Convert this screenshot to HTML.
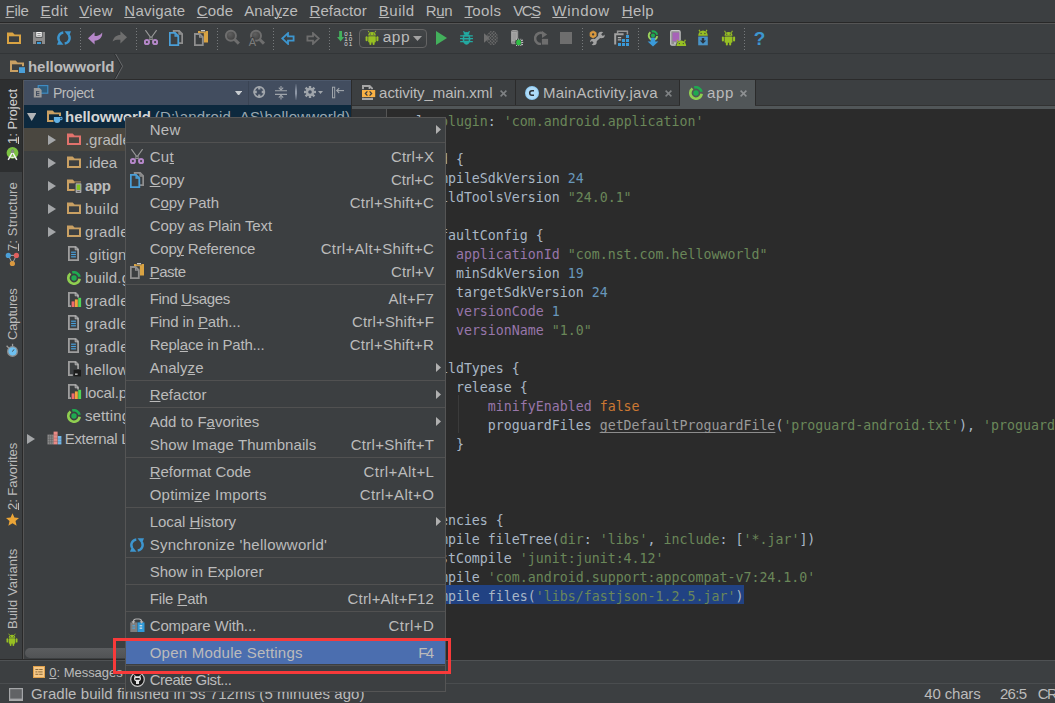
<!DOCTYPE html>
<html><head><meta charset="utf-8"><title>hellowworld - Android Studio</title>
<style>
html,body{margin:0;padding:0;background:#3c3f41;overflow:hidden;}
#app{position:relative;width:1055px;height:703px;overflow:hidden;background:#3c3f41;font-family:'Liberation Sans', sans-serif;}
#app div,#app svg,#app span.t{position:absolute;}
#app span.t{white-space:pre;line-height:20px;height:20px;}
#app .code{font-family:'DejaVu Sans Mono', 'Liberation Mono', monospace;font-size:13.288px;line-height:19px;height:19px;white-space:pre;padding-top:1.1px;box-sizing:border-box;}
#app u{text-decoration:underline;text-underline-offset:1px;text-decoration-thickness:1px;}
</style></head><body>
<div id="app">
<div style="left:0px;top:0px;width:1055px;height:703px;background:#3c3f41;"></div>
<div style="left:0px;top:22px;width:1055px;height:1px;background:#282828;"></div>
<div style="left:0px;top:23px;width:1055px;height:1px;background:#555555;"></div>
<div style="left:0px;top:79px;width:1055px;height:1px;background:#323232;"></div>
<span class="t" style="left:5.50px;top:0.80px;font-size:15px;color:#bbbbbb;letter-spacing:-0.257px;"><u>F</u>ile</span>
<span class="t" style="left:40.50px;top:0.80px;font-size:15px;color:#bbbbbb;letter-spacing:0.447px;"><u>E</u>dit</span>
<span class="t" style="left:79.30px;top:0.80px;font-size:15px;color:#bbbbbb;letter-spacing:0.317px;"><u>V</u>iew</span>
<span class="t" style="left:124.30px;top:0.80px;font-size:15px;color:#bbbbbb;letter-spacing:0.242px;"><u>N</u>avigate</span>
<span class="t" style="left:196.80px;top:0.80px;font-size:15px;color:#bbbbbb;letter-spacing:0.180px;"><u>C</u>ode</span>
<span class="t" style="left:244.30px;top:0.80px;font-size:15px;color:#bbbbbb;letter-spacing:0.037px;">Anal<u>y</u>ze</span>
<span class="t" style="left:309.50px;top:0.80px;font-size:15px;color:#bbbbbb;letter-spacing:0.071px;"><u>R</u>efactor</span>
<span class="t" style="left:378.80px;top:0.80px;font-size:15px;color:#bbbbbb;letter-spacing:0.510px;"><u>B</u>uild</span>
<span class="t" style="left:425.80px;top:0.80px;font-size:15px;color:#bbbbbb;letter-spacing:-0.316px;">R<u>u</u>n</span>
<span class="t" style="left:464.50px;top:0.80px;font-size:15px;color:#bbbbbb;letter-spacing:0.342px;"><u>T</u>ools</span>
<span class="t" style="left:513.30px;top:0.80px;font-size:15px;color:#bbbbbb;letter-spacing:-1.500px;">VC<u>S</u></span>
<span class="t" style="left:552.30px;top:0.80px;font-size:15px;color:#bbbbbb;letter-spacing:0.708px;"><u>W</u>indow</span>
<span class="t" style="left:621.80px;top:0.80px;font-size:15px;color:#bbbbbb;letter-spacing:0.347px;"><u>H</u>elp</span>
<div style="left:80px;top:28px;width:1px;height:1px;background:#777a7c;"></div>
<div style="left:80px;top:31px;width:1px;height:1px;background:#777a7c;"></div>
<div style="left:80px;top:34px;width:1px;height:1px;background:#777a7c;"></div>
<div style="left:80px;top:37px;width:1px;height:1px;background:#777a7c;"></div>
<div style="left:80px;top:40px;width:1px;height:1px;background:#777a7c;"></div>
<div style="left:80px;top:43px;width:1px;height:1px;background:#777a7c;"></div>
<div style="left:80px;top:46px;width:1px;height:1px;background:#777a7c;"></div>
<div style="left:80px;top:49px;width:1px;height:1px;background:#777a7c;"></div>
<div style="left:136px;top:28px;width:1px;height:1px;background:#777a7c;"></div>
<div style="left:136px;top:31px;width:1px;height:1px;background:#777a7c;"></div>
<div style="left:136px;top:34px;width:1px;height:1px;background:#777a7c;"></div>
<div style="left:136px;top:37px;width:1px;height:1px;background:#777a7c;"></div>
<div style="left:136px;top:40px;width:1px;height:1px;background:#777a7c;"></div>
<div style="left:136px;top:43px;width:1px;height:1px;background:#777a7c;"></div>
<div style="left:136px;top:46px;width:1px;height:1px;background:#777a7c;"></div>
<div style="left:136px;top:49px;width:1px;height:1px;background:#777a7c;"></div>
<div style="left:217px;top:28px;width:1px;height:1px;background:#777a7c;"></div>
<div style="left:217px;top:31px;width:1px;height:1px;background:#777a7c;"></div>
<div style="left:217px;top:34px;width:1px;height:1px;background:#777a7c;"></div>
<div style="left:217px;top:37px;width:1px;height:1px;background:#777a7c;"></div>
<div style="left:217px;top:40px;width:1px;height:1px;background:#777a7c;"></div>
<div style="left:217px;top:43px;width:1px;height:1px;background:#777a7c;"></div>
<div style="left:217px;top:46px;width:1px;height:1px;background:#777a7c;"></div>
<div style="left:217px;top:49px;width:1px;height:1px;background:#777a7c;"></div>
<div style="left:273px;top:28px;width:1px;height:1px;background:#777a7c;"></div>
<div style="left:273px;top:31px;width:1px;height:1px;background:#777a7c;"></div>
<div style="left:273px;top:34px;width:1px;height:1px;background:#777a7c;"></div>
<div style="left:273px;top:37px;width:1px;height:1px;background:#777a7c;"></div>
<div style="left:273px;top:40px;width:1px;height:1px;background:#777a7c;"></div>
<div style="left:273px;top:43px;width:1px;height:1px;background:#777a7c;"></div>
<div style="left:273px;top:46px;width:1px;height:1px;background:#777a7c;"></div>
<div style="left:273px;top:49px;width:1px;height:1px;background:#777a7c;"></div>
<div style="left:329px;top:28px;width:1px;height:1px;background:#777a7c;"></div>
<div style="left:329px;top:31px;width:1px;height:1px;background:#777a7c;"></div>
<div style="left:329px;top:34px;width:1px;height:1px;background:#777a7c;"></div>
<div style="left:329px;top:37px;width:1px;height:1px;background:#777a7c;"></div>
<div style="left:329px;top:40px;width:1px;height:1px;background:#777a7c;"></div>
<div style="left:329px;top:43px;width:1px;height:1px;background:#777a7c;"></div>
<div style="left:329px;top:46px;width:1px;height:1px;background:#777a7c;"></div>
<div style="left:329px;top:49px;width:1px;height:1px;background:#777a7c;"></div>
<div style="left:582px;top:28px;width:1px;height:1px;background:#777a7c;"></div>
<div style="left:582px;top:31px;width:1px;height:1px;background:#777a7c;"></div>
<div style="left:582px;top:34px;width:1px;height:1px;background:#777a7c;"></div>
<div style="left:582px;top:37px;width:1px;height:1px;background:#777a7c;"></div>
<div style="left:582px;top:40px;width:1px;height:1px;background:#777a7c;"></div>
<div style="left:582px;top:43px;width:1px;height:1px;background:#777a7c;"></div>
<div style="left:582px;top:46px;width:1px;height:1px;background:#777a7c;"></div>
<div style="left:582px;top:49px;width:1px;height:1px;background:#777a7c;"></div>
<div style="left:638px;top:28px;width:1px;height:1px;background:#777a7c;"></div>
<div style="left:638px;top:31px;width:1px;height:1px;background:#777a7c;"></div>
<div style="left:638px;top:34px;width:1px;height:1px;background:#777a7c;"></div>
<div style="left:638px;top:37px;width:1px;height:1px;background:#777a7c;"></div>
<div style="left:638px;top:40px;width:1px;height:1px;background:#777a7c;"></div>
<div style="left:638px;top:43px;width:1px;height:1px;background:#777a7c;"></div>
<div style="left:638px;top:46px;width:1px;height:1px;background:#777a7c;"></div>
<div style="left:638px;top:49px;width:1px;height:1px;background:#777a7c;"></div>
<div style="left:744px;top:28px;width:1px;height:1px;background:#777a7c;"></div>
<div style="left:744px;top:31px;width:1px;height:1px;background:#777a7c;"></div>
<div style="left:744px;top:34px;width:1px;height:1px;background:#777a7c;"></div>
<div style="left:744px;top:37px;width:1px;height:1px;background:#777a7c;"></div>
<div style="left:744px;top:40px;width:1px;height:1px;background:#777a7c;"></div>
<div style="left:744px;top:43px;width:1px;height:1px;background:#777a7c;"></div>
<div style="left:744px;top:46px;width:1px;height:1px;background:#777a7c;"></div>
<div style="left:744px;top:49px;width:1px;height:1px;background:#777a7c;"></div>
<svg style="left:7px;top:32px;" width="14" height="12" viewBox="0 0 14 12"><path d="M0 0.5h5.6l2 2H14V12H0z" fill="#d9a343"/><rect x="2" y="4.3" width="10" height="5.7" fill="#3c3f41"/></svg>
<svg style="left:33px;top:32px;" width="12" height="12" viewBox="0 0 12 12"><path d="M0 0h12v12H0z" fill="#8c8c8c"/><rect x="2.6" y="0" width="6.8" height="5.6" fill="#3c3f41"/><rect x="3.2" y="0" width="5.6" height="4.8" fill="#f4f4f4"/><rect x="4.3" y="1.2" width="3.4" height="0.8" fill="#777"/><rect x="4.3" y="2.9" width="3.4" height="0.8" fill="#777"/><rect x="3" y="9" width="6" height="3" fill="#3c3f41"/><rect x="4" y="10" width="4" height="2" fill="#3a9ad9"/></svg>
<svg style="left:57px;top:31px;" width="14" height="14" viewBox="0 0 14 14"><g fill="none" stroke="#3d96cf" stroke-width="2.5"><path d="M6.3 1.45A5.6 5.6 0 0 0 2.15 9.8"/><path d="M7.7 12.55A5.6 5.6 0 0 0 11.85 4.2"/></g><path d="M7.5 0.3H14L11.9 5.8z" fill="#3d96cf"/><path d="M6.5 13.7H0L2.1 8.2z" fill="#3d96cf"/></svg>
<svg style="left:88px;top:32px;" width="15" height="13" viewBox="0 0 15 13"><path d="M0 6.2L6.6 0.3V4C9.5 4 12.6 3 14.2 0.4C14.6 5 11.5 8.6 6.6 8.7V12.6z" fill="#b587c9"/></svg>
<svg style="left:112px;top:31px;" width="15" height="13" viewBox="0 0 15 13"><path d="M15 6.2L8.4 0.3V4C5.5 4 2 5.2 0.6 10.5C2.4 8.8 5 8.6 8.4 8.7V12.6z" fill="#6e6e6e"/></svg>
<svg style="left:144px;top:30px;" width="14" height="15" viewBox="0 0 14 15"><g stroke="#9c9c9c" stroke-width="1.1" fill="none"><path d="M1.4 0.2L8.6 10.2"/><path d="M12.6 0.2L5.4 10.2"/></g><rect x="5.9" y="7.2" width="2.2" height="2.2" fill="#3c3f41" stroke="#9c9c9c" stroke-width="0.8"/><circle cx="2.9" cy="12.1" r="2.1" fill="none" stroke="#b587c9" stroke-width="2"/><circle cx="11.1" cy="12.1" r="2.1" fill="none" stroke="#b587c9" stroke-width="2"/></svg>
<svg style="left:169px;top:30px;" width="14" height="16" viewBox="0 0 14 16"><path d="M4.7 0.8H10.0L13.2 4.0V13.200000000000001H4.7z" fill="#3c3f41" stroke="#8f8f8f" stroke-width="1.8" stroke-linejoin="miter"/><path d="M10.0 0.8V4.0H13.2" fill="none" stroke="#8f8f8f" stroke-width="1.26"/><path d="M0.8 2.8H6.1000000000000005L9.3 6.0V15.2H0.8z" fill="#3c3f41" stroke="#4a9fd8" stroke-width="1.8" stroke-linejoin="miter"/><path d="M6.1000000000000005 2.8V6.0H9.3" fill="none" stroke="#4a9fd8" stroke-width="1.26"/></svg>
<svg style="left:194px;top:30px;" width="14" height="16" viewBox="0 0 14 16"><rect x="4" y="1" width="10" height="11.5" fill="#d9a343"/><rect x="7" y="0" width="4" height="1.6" fill="#c9c9c9"/><rect x="6" y="1.2" width="6" height="1" fill="#3c3f41" opacity="0.5"/><rect x="0" y="3.2" width="9.8" height="13" fill="#3c3f41"/><path d="M0.8 4H5.6000000000000005L8.8 7.2V15.2H0.8z" fill="#3c3f41" stroke="#8f8f8f" stroke-width="1.8" stroke-linejoin="miter"/><path d="M5.6000000000000005 4V7.2H8.8" fill="none" stroke="#8f8f8f" stroke-width="1.26"/></svg>
<svg width="0" height="0" style="left:0;top:0"><defs><radialGradient id="lens" cx="0.4" cy="0.35" r="0.7"><stop offset="0" stop-color="#606060"/><stop offset="1" stop-color="#3e3e3e"/></radialGradient></defs></svg>
<svg style="left:224px;top:29px;" width="17" height="17" viewBox="0 0 17 17"><path d="M10.65 10.45L14.850000000000001 14.649999999999999" stroke="#6e6e6e" stroke-width="3" stroke-linecap="butt"/><circle cx="6.9" cy="6.7" r="5" fill="url(#lens)" stroke="#6e6e6e" stroke-width="2"/></svg>
<svg style="left:248px;top:29px;" width="18" height="18" viewBox="0 0 18 18"><path d="M11.75 10.45L15.95 14.649999999999999" stroke="#6e6e6e" stroke-width="3" stroke-linecap="butt"/><circle cx="8" cy="6.7" r="5" fill="url(#lens)" stroke="#6e6e6e" stroke-width="2"/><text x="0.8" y="16.7" font-family="Liberation Sans, sans-serif" font-size="11" fill="#7c7c7c" stroke="#3c3f41" stroke-width="2" paint-order="stroke">A</text></svg>
<svg style="left:281px;top:32px;" width="14" height="13" viewBox="0 0 14 13"><path d="M1.2 6.5L7 1.2V4.3H12.6V8.7H7V11.8z" fill="none" stroke="#3d96cf" stroke-width="1.8" stroke-linejoin="miter"/></svg>
<svg style="left:306px;top:32px;" width="14" height="13" viewBox="0 0 14 13"><path d="M12.8 6.5L7 1.2V4.3H1.4V8.7H7V11.8z" fill="none" stroke="#6e6e6e" stroke-width="1.8" stroke-linejoin="miter"/></svg>
<svg style="left:336.6px;top:30.4px;" width="7.2" height="12.4" viewBox="0 0 8 13"><path d="M2.4 0.8H5.6V7.4H8L4 12.3L0 7.4H2.4z" fill="#43b05c"/></svg>
<span class="t" style="left:344.30px;top:23.65px;font-size:6.2px;color:#dcdcdc;letter-spacing:0.909px;">01</span>
<span class="t" style="left:344.30px;top:28.65px;font-size:6.2px;color:#dcdcdc;letter-spacing:0.909px;">10</span>
<span class="t" style="left:344.30px;top:33.65px;font-size:6.2px;color:#dcdcdc;letter-spacing:0.909px;">01</span>
<div style="left:359px;top:29px;width:68px;height:19px;background:#3c3f41;border:1px solid #646464;border-radius:4px;box-sizing:border-box;background:linear-gradient(#434648,#393c3e);"></div>
<svg style="left:365px;top:30px;" width="14" height="15.5" viewBox="0 0 14 15.5"><g fill="#97c023"><path d="M3.2 5.6a3.8 3.6 0 0 1 7.6 0z"/><rect x="3.2" y="6.2" width="7.6" height="6.2" rx="0.8"/><rect x="0.6" y="6.2" width="2" height="5" rx="1"/><rect x="11.4" y="6.2" width="2" height="5" rx="1"/><rect x="4.4" y="11.5" width="2" height="3.6" rx="1"/><rect x="7.6" y="11.5" width="2" height="3.6" rx="1"/><path d="M4.2 2.6L3.2 0.8M9.8 2.6L10.8 0.8" stroke="#97c023" stroke-width="1"/></g><circle cx="5.3" cy="4" r="0.55" fill="#3c3f41"/><circle cx="8.7" cy="4" r="0.55" fill="#3c3f41"/></svg>
<span class="t" style="left:382.70px;top:27.43px;font-size:15.5px;color:#bbbbbb;letter-spacing:0.562px;">app</span>
<svg style="left:413px;top:36px;" width="9" height="5" viewBox="0 0 9 5"><path d="M0 0H9L4.5 5z" fill="#a2a2a2"/></svg>
<svg style="left:436px;top:31px;" width="11" height="14" viewBox="0 0 11 14"><path d="M0 0L11 7L0 14z" fill="#43b05c"/></svg>
<svg style="left:459.5px;top:31px;" width="13" height="14" viewBox="0 0 13 14"><g fill="#23a9a1"><ellipse cx="6.5" cy="8.2" rx="3.9" ry="5.5"/><path d="M3.6 3.4a2.9 2.4 0 0 1 5.8 0z"/></g><g stroke="#23a9a1" stroke-width="1.25" fill="none"><path d="M0.2 4.9H12.8M0 7.7H13M0.2 10.5H12.8"/><path d="M3.4 0.4L5.4 2.6M9.6 0.4L7.6 2.6" stroke-width="1.4"/></g><rect x="4.3" y="5.75" width="4.4" height="1.15" fill="#3c3f41"/><rect x="4.3" y="8.55" width="4.4" height="1.15" fill="#3c3f41"/></svg>
<svg style="left:484px;top:31px;" width="14" height="14" viewBox="0 0 14 14"><defs><clipPath id="cvc"><ellipse cx="8.4" cy="7" rx="5.7" ry="7.2"/></clipPath></defs><g clip-path="url(#cvc)"><path d="M0.20 -3.70L1.30 -2.60L0.20 -1.50L-0.90 -2.60z" fill="#6c6c6c"/><path d="M1.80 -2.10L2.90 -1.00L1.80 0.10L0.70 -1.00z" fill="#6c6c6c"/><path d="M0.20 -0.50L1.30 0.60L0.20 1.70L-0.90 0.60z" fill="#6c6c6c"/><path d="M1.80 1.10L2.90 2.20L1.80 3.30L0.70 2.20z" fill="#6c6c6c"/><path d="M0.20 2.70L1.30 3.80L0.20 4.90L-0.90 3.80z" fill="#6c6c6c"/><path d="M1.80 4.30L2.90 5.40L1.80 6.50L0.70 5.40z" fill="#6c6c6c"/><path d="M0.20 5.90L1.30 7.00L0.20 8.10L-0.90 7.00z" fill="#6c6c6c"/><path d="M1.80 7.50L2.90 8.60L1.80 9.70L0.70 8.60z" fill="#6c6c6c"/><path d="M0.20 9.10L1.30 10.20L0.20 11.30L-0.90 10.20z" fill="#6c6c6c"/><path d="M1.80 10.70L2.90 11.80L1.80 12.90L0.70 11.80z" fill="#6c6c6c"/><path d="M0.20 12.30L1.30 13.40L0.20 14.50L-0.90 13.40z" fill="#6c6c6c"/><path d="M1.80 13.90L2.90 15.00L1.80 16.10L0.70 15.00z" fill="#6c6c6c"/><path d="M0.20 15.50L1.30 16.60L0.20 17.70L-0.90 16.60z" fill="#6c6c6c"/><path d="M1.80 17.10L2.90 18.20L1.80 19.30L0.70 18.20z" fill="#6c6c6c"/><path d="M3.40 -3.70L4.50 -2.60L3.40 -1.50L2.30 -2.60z" fill="#6c6c6c"/><path d="M5.00 -2.10L6.10 -1.00L5.00 0.10L3.90 -1.00z" fill="#6c6c6c"/><path d="M3.40 -0.50L4.50 0.60L3.40 1.70L2.30 0.60z" fill="#6c6c6c"/><path d="M5.00 1.10L6.10 2.20L5.00 3.30L3.90 2.20z" fill="#6c6c6c"/><path d="M3.40 2.70L4.50 3.80L3.40 4.90L2.30 3.80z" fill="#6c6c6c"/><path d="M5.00 4.30L6.10 5.40L5.00 6.50L3.90 5.40z" fill="#6c6c6c"/><path d="M3.40 5.90L4.50 7.00L3.40 8.10L2.30 7.00z" fill="#6c6c6c"/><path d="M5.00 7.50L6.10 8.60L5.00 9.70L3.90 8.60z" fill="#6c6c6c"/><path d="M3.40 9.10L4.50 10.20L3.40 11.30L2.30 10.20z" fill="#6c6c6c"/><path d="M5.00 10.70L6.10 11.80L5.00 12.90L3.90 11.80z" fill="#6c6c6c"/><path d="M3.40 12.30L4.50 13.40L3.40 14.50L2.30 13.40z" fill="#6c6c6c"/><path d="M5.00 13.90L6.10 15.00L5.00 16.10L3.90 15.00z" fill="#6c6c6c"/><path d="M3.40 15.50L4.50 16.60L3.40 17.70L2.30 16.60z" fill="#6c6c6c"/><path d="M5.00 17.10L6.10 18.20L5.00 19.30L3.90 18.20z" fill="#6c6c6c"/><path d="M6.60 -3.70L7.70 -2.60L6.60 -1.50L5.50 -2.60z" fill="#6c6c6c"/><path d="M8.20 -2.10L9.30 -1.00L8.20 0.10L7.10 -1.00z" fill="#6c6c6c"/><path d="M6.60 -0.50L7.70 0.60L6.60 1.70L5.50 0.60z" fill="#6c6c6c"/><path d="M8.20 1.10L9.30 2.20L8.20 3.30L7.10 2.20z" fill="#6c6c6c"/><path d="M6.60 2.70L7.70 3.80L6.60 4.90L5.50 3.80z" fill="#6c6c6c"/><path d="M8.20 4.30L9.30 5.40L8.20 6.50L7.10 5.40z" fill="#6c6c6c"/><path d="M6.60 5.90L7.70 7.00L6.60 8.10L5.50 7.00z" fill="#6c6c6c"/><path d="M8.20 7.50L9.30 8.60L8.20 9.70L7.10 8.60z" fill="#6c6c6c"/><path d="M6.60 9.10L7.70 10.20L6.60 11.30L5.50 10.20z" fill="#6c6c6c"/><path d="M8.20 10.70L9.30 11.80L8.20 12.90L7.10 11.80z" fill="#6c6c6c"/><path d="M6.60 12.30L7.70 13.40L6.60 14.50L5.50 13.40z" fill="#6c6c6c"/><path d="M8.20 13.90L9.30 15.00L8.20 16.10L7.10 15.00z" fill="#6c6c6c"/><path d="M6.60 15.50L7.70 16.60L6.60 17.70L5.50 16.60z" fill="#6c6c6c"/><path d="M8.20 17.10L9.30 18.20L8.20 19.30L7.10 18.20z" fill="#6c6c6c"/><path d="M9.80 -3.70L10.90 -2.60L9.80 -1.50L8.70 -2.60z" fill="#6c6c6c"/><path d="M11.40 -2.10L12.50 -1.00L11.40 0.10L10.30 -1.00z" fill="#6c6c6c"/><path d="M9.80 -0.50L10.90 0.60L9.80 1.70L8.70 0.60z" fill="#6c6c6c"/><path d="M11.40 1.10L12.50 2.20L11.40 3.30L10.30 2.20z" fill="#6c6c6c"/><path d="M9.80 2.70L10.90 3.80L9.80 4.90L8.70 3.80z" fill="#6c6c6c"/><path d="M11.40 4.30L12.50 5.40L11.40 6.50L10.30 5.40z" fill="#6c6c6c"/><path d="M9.80 5.90L10.90 7.00L9.80 8.10L8.70 7.00z" fill="#6c6c6c"/><path d="M11.40 7.50L12.50 8.60L11.40 9.70L10.30 8.60z" fill="#6c6c6c"/><path d="M9.80 9.10L10.90 10.20L9.80 11.30L8.70 10.20z" fill="#6c6c6c"/><path d="M11.40 10.70L12.50 11.80L11.40 12.90L10.30 11.80z" fill="#6c6c6c"/><path d="M9.80 12.30L10.90 13.40L9.80 14.50L8.70 13.40z" fill="#6c6c6c"/><path d="M11.40 13.90L12.50 15.00L11.40 16.10L10.30 15.00z" fill="#6c6c6c"/><path d="M9.80 15.50L10.90 16.60L9.80 17.70L8.70 16.60z" fill="#6c6c6c"/><path d="M11.40 17.10L12.50 18.20L11.40 19.30L10.30 18.20z" fill="#6c6c6c"/><path d="M13.00 -3.70L14.10 -2.60L13.00 -1.50L11.90 -2.60z" fill="#6c6c6c"/><path d="M14.60 -2.10L15.70 -1.00L14.60 0.10L13.50 -1.00z" fill="#6c6c6c"/><path d="M13.00 -0.50L14.10 0.60L13.00 1.70L11.90 0.60z" fill="#6c6c6c"/><path d="M14.60 1.10L15.70 2.20L14.60 3.30L13.50 2.20z" fill="#6c6c6c"/><path d="M13.00 2.70L14.10 3.80L13.00 4.90L11.90 3.80z" fill="#6c6c6c"/><path d="M14.60 4.30L15.70 5.40L14.60 6.50L13.50 5.40z" fill="#6c6c6c"/><path d="M13.00 5.90L14.10 7.00L13.00 8.10L11.90 7.00z" fill="#6c6c6c"/><path d="M14.60 7.50L15.70 8.60L14.60 9.70L13.50 8.60z" fill="#6c6c6c"/><path d="M13.00 9.10L14.10 10.20L13.00 11.30L11.90 10.20z" fill="#6c6c6c"/><path d="M14.60 10.70L15.70 11.80L14.60 12.90L13.50 11.80z" fill="#6c6c6c"/><path d="M13.00 12.30L14.10 13.40L13.00 14.50L11.90 13.40z" fill="#6c6c6c"/><path d="M14.60 13.90L15.70 15.00L14.60 16.10L13.50 15.00z" fill="#6c6c6c"/><path d="M13.00 15.50L14.10 16.60L13.00 17.70L11.90 16.60z" fill="#6c6c6c"/><path d="M14.60 17.10L15.70 18.20L14.60 19.30L13.50 18.20z" fill="#6c6c6c"/><path d="M16.20 -3.70L17.30 -2.60L16.20 -1.50L15.10 -2.60z" fill="#6c6c6c"/><path d="M17.80 -2.10L18.90 -1.00L17.80 0.10L16.70 -1.00z" fill="#6c6c6c"/><path d="M16.20 -0.50L17.30 0.60L16.20 1.70L15.10 0.60z" fill="#6c6c6c"/><path d="M17.80 1.10L18.90 2.20L17.80 3.30L16.70 2.20z" fill="#6c6c6c"/><path d="M16.20 2.70L17.30 3.80L16.20 4.90L15.10 3.80z" fill="#6c6c6c"/><path d="M17.80 4.30L18.90 5.40L17.80 6.50L16.70 5.40z" fill="#6c6c6c"/><path d="M16.20 5.90L17.30 7.00L16.20 8.10L15.10 7.00z" fill="#6c6c6c"/><path d="M17.80 7.50L18.90 8.60L17.80 9.70L16.70 8.60z" fill="#6c6c6c"/><path d="M16.20 9.10L17.30 10.20L16.20 11.30L15.10 10.20z" fill="#6c6c6c"/><path d="M17.80 10.70L18.90 11.80L17.80 12.90L16.70 11.80z" fill="#6c6c6c"/><path d="M16.20 12.30L17.30 13.40L16.20 14.50L15.10 13.40z" fill="#6c6c6c"/><path d="M17.80 13.90L18.90 15.00L17.80 16.10L16.70 15.00z" fill="#6c6c6c"/><path d="M16.20 15.50L17.30 16.60L16.20 17.70L15.10 16.60z" fill="#6c6c6c"/><path d="M17.80 17.10L18.90 18.20L17.80 19.30L16.70 18.20z" fill="#6c6c6c"/><path d="M19.40 -3.70L20.50 -2.60L19.40 -1.50L18.30 -2.60z" fill="#6c6c6c"/><path d="M21.00 -2.10L22.10 -1.00L21.00 0.10L19.90 -1.00z" fill="#6c6c6c"/><path d="M19.40 -0.50L20.50 0.60L19.40 1.70L18.30 0.60z" fill="#6c6c6c"/><path d="M21.00 1.10L22.10 2.20L21.00 3.30L19.90 2.20z" fill="#6c6c6c"/><path d="M19.40 2.70L20.50 3.80L19.40 4.90L18.30 3.80z" fill="#6c6c6c"/><path d="M21.00 4.30L22.10 5.40L21.00 6.50L19.90 5.40z" fill="#6c6c6c"/><path d="M19.40 5.90L20.50 7.00L19.40 8.10L18.30 7.00z" fill="#6c6c6c"/><path d="M21.00 7.50L22.10 8.60L21.00 9.70L19.90 8.60z" fill="#6c6c6c"/><path d="M19.40 9.10L20.50 10.20L19.40 11.30L18.30 10.20z" fill="#6c6c6c"/><path d="M21.00 10.70L22.10 11.80L21.00 12.90L19.90 11.80z" fill="#6c6c6c"/><path d="M19.40 12.30L20.50 13.40L19.40 14.50L18.30 13.40z" fill="#6c6c6c"/><path d="M21.00 13.90L22.10 15.00L21.00 16.10L19.90 15.00z" fill="#6c6c6c"/><path d="M19.40 15.50L20.50 16.60L19.40 17.70L18.30 16.60z" fill="#6c6c6c"/><path d="M21.00 17.10L22.10 18.20L21.00 19.30L19.90 18.20z" fill="#6c6c6c"/></g><path d="M0 2.2L5.6 7L0 11.8z" fill="#6e6e6e"/></svg>
<svg style="left:511px;top:30px;" width="13" height="16" viewBox="0 0 13 16"><rect x="0.5" y="0.5" width="6.2" height="13.2" rx="1" fill="#8a8a8a" stroke="#a2a2a2" stroke-width="0.9"/><rect x="1.7" y="2.3" width="3.8" height="8.6" fill="#9c9c9c" stroke="#b4b4b4" stroke-width="0.5"/><ellipse cx="7.8" cy="12.3" rx="3.6" ry="3.9" fill="#3c3f41"/><ellipse cx="7.6" cy="12.4" rx="2.4" ry="2.9" fill="#2fbf45"/><g stroke="#e0e0e0" stroke-width="0.9"><path d="M10 10.8L12 10M10.2 12.4H12.2M10 14L12 14.8"/></g><g fill="#e0e0e0"><rect x="5" y="8.8" width="0.9" height="0.9"/><rect x="7.2" y="8.6" width="0.9" height="0.9"/><rect x="9.4" y="8.8" width="0.9" height="0.9"/><rect x="5" y="15.1" width="0.9" height="0.9"/><rect x="7.2" y="15.4" width="0.9" height="0.9"/><rect x="9.4" y="15.1" width="0.9" height="0.9"/></g></svg>
<svg style="left:534px;top:31px;" width="15" height="14" viewBox="0 0 15 14"><path d="M7 13A5.6 5.6 0 1 1 9.6 2.6" fill="none" stroke="#6e6e6e" stroke-width="2.6"/><path d="M8 0L13.2 3.4L8 7z" fill="#6e6e6e"/><rect x="7.4" y="7.4" width="7" height="6.6" fill="#6e6e6e" stroke="#3c3f41" stroke-width="0.8"/></svg>
<div style="left:560px;top:32px;width:12px;height:12px;background:#6e6e6e;"></div>
<svg style="left:589px;top:30px;" width="17" height="16" viewBox="0 0 17 16"><g fill="#a2a2a2"><path d="M4.2 10.4L10.6 4.6L12.6 6.8L6.2 12.6z"/><circle cx="12.4" cy="5" r="3.3"/><circle cx="4.4" cy="12" r="3.3"/></g><path d="M12.2 4.2L16.4 -0.4L18 3.2L13.8 6z" fill="#3c3f41"/><path d="M4.6 12.8L0.4 17.4L-1.2 13.8L3 11z" fill="#3c3f41"/><path d="M4.1 0.9L7.1 2.6V6.2L4.1 7.9L1.1 6.2V2.6z" fill="#d9983f" stroke="#d9983f" stroke-width="0.8" stroke-linejoin="round"/><circle cx="4.1" cy="4.4" r="1.15" fill="#3c3f41"/></svg>
<svg style="left:614px;top:30px;" width="16" height="16" viewBox="0 0 16 16"><path d="M3.6 3.4V1.2H13.4V4.6" fill="none" stroke="#969696" stroke-width="1.5"/><path d="M9.6 4.2H1.2V14.6" fill="none" stroke="#a2a2a2" stroke-width="2"/><rect x="3.8" y="7.2" width="3.4" height="1" fill="#d0d0d0"/><rect x="3.8" y="9.4" width="3.4" height="1" fill="#d0d0d0"/><rect x="4" y="13" width="3" height="3" fill="#3a9ad9"/><rect x="8" y="9" width="3" height="3" fill="#3a9ad9"/><rect x="8" y="13" width="3" height="3" fill="#3a9ad9"/><rect x="12" y="5" width="3" height="3" fill="#3a9ad9"/><rect x="12" y="9" width="3" height="3" fill="#3a9ad9"/><rect x="12" y="13" width="3" height="3" fill="#3a9ad9"/></svg>
<svg style="left:647px;top:29.6px;" width="12" height="17" viewBox="0 0 12 17"><path d="M10.26 6.20A4.3 4.3 0 1 1 3.35 2.21" fill="none" stroke="#9bd45c" stroke-width="1.9"/><path d="M4.67 1.51A4.3 4.3 0 0 1 10.21 4.71" fill="none" stroke="#1faa50" stroke-width="1.9"/><circle cx="6" cy="5.6" r="2.1" fill="#1faa50"/><path d="M3.8 7.8H8.2V11.4H11.4L6 16.4L0.6 11.4H3.8z" fill="#3a9ad9"/></svg>
<svg style="left:669.5px;top:30px;" width="17" height="16" viewBox="0 0 17 16"><rect x="0.7" y="0.7" width="9.4" height="14.4" rx="1.2" fill="#8e8e8e" stroke="#c6c6c6" stroke-width="1.2"/><rect x="2.6" y="2.6" width="6.6" height="8.6" fill="#a763b8"/><rect x="4" y="12.6" width="3" height="1" fill="#d8d8d8"/><path d="M5.6 16.4a5.6 6 0 0 1 11.2 0z" fill="#3c3f41"/><path d="M6.4 16a4.9 5.4 0 0 1 9.8 0z" fill="#97c023"/><path d="M8.2 11.8L7.2 9.8M14.4 11.8L15.4 9.8" stroke="#97c023" stroke-width="1.2"/><circle cx="9.3" cy="13.6" r="0.65" fill="#3c3f41"/><circle cx="13.3" cy="13.6" r="0.65" fill="#3c3f41"/></svg>
<svg style="left:696px;top:29px;" width="14" height="17" viewBox="0 0 14 17"><path d="M2.2 6.7a4.8 5.2 0 0 1 9.6 0z" fill="#97c023"/><path d="M4.2 2.8L3 0.9M9.8 2.8L11 0.9" stroke="#97c023" stroke-width="1.2"/><circle cx="5.1" cy="4.5" r="0.65" fill="#3c3f41"/><circle cx="8.9" cy="4.5" r="0.65" fill="#3c3f41"/><rect x="2.2" y="7.5" width="9.6" height="8.8" fill="#4a93c6"/><path d="M5.8 9H8.2V11.6H10.2L7 14.8L3.8 11.6H5.8z" fill="#2b3540"/></svg>
<svg style="left:720.5px;top:29.5px;" width="15" height="16" viewBox="0 0 14 15.5"><g fill="#97c023"><path d="M3.2 5.6a3.8 3.6 0 0 1 7.6 0z"/><rect x="3.2" y="6.2" width="7.6" height="6.2" rx="0.8"/><rect x="0.6" y="6.2" width="2" height="5" rx="1"/><rect x="11.4" y="6.2" width="2" height="5" rx="1"/><rect x="4.4" y="11.5" width="2" height="3.6" rx="1"/><rect x="7.6" y="11.5" width="2" height="3.6" rx="1"/><path d="M4.2 2.6L3.2 0.8M9.8 2.6L10.8 0.8" stroke="#97c023" stroke-width="1"/></g><circle cx="5.3" cy="4" r="0.55" fill="#3c3f41"/><circle cx="8.7" cy="4" r="0.55" fill="#3c3f41"/></svg>
<span class="t" style="left:753.70px;top:28.62px;font-size:19px;color:#3d96cf;font-weight:700;">?</span>
<div style="left:0px;top:53px;width:1055px;height:1px;background:#323537;"></div>
<div style="left:0px;top:79px;width:1055px;height:1px;background:#2b2b2b;"></div>
<svg style="left:10px;top:60px;" width="16" height="13" viewBox="0 0 16 13"><path d="M0 0.5h5.6l2 2H14V12H0z" fill="#c9a063"/><rect x="2" y="4.3" width="10" height="5.7" fill="#3c3f41"/><rect x="8" y="6.2" width="7.2" height="6.8" fill="#3c3f41"/><rect x="9" y="7.2" width="6" height="5.8" fill="#4a9fd8"/></svg>
<span class="t" style="left:27.90px;top:57.10px;font-size:15px;color:#bbbbbb;font-weight:700;letter-spacing:-0.007px;">hellowworld</span>
<svg style="left:113px;top:53px;" width="12" height="27" viewBox="0 0 12 27"><path d="M1.6 1L8.6 13.2L1.6 26" fill="none" stroke="#2f3133" stroke-width="1.2"/><path d="M2.6 1L9.6 13.2L2.6 26" fill="none" stroke="#67696b" stroke-width="1"/></svg>
<div style="left:22px;top:80px;width:1px;height:580px;background:#292929;"></div>
<div style="left:23px;top:80px;width:1px;height:580px;background:#555555;"></div>
<div style="left:0px;top:80px;width:22px;height:92px;background:#2d2f30;"></div>
<span class="t" style="left:2.50px;top:143.60px;font-size:13px;color:#d0d0d0;transform:rotate(-90deg);transform-origin:0 0;letter-spacing:0.031px;"><u>1</u>: Project</span>
<span class="t" style="left:2.50px;top:251.10px;font-size:13px;color:#bbbbbb;transform:rotate(-90deg);transform-origin:0 0;letter-spacing:0.136px;"><u>7</u>: Structure</span>
<span class="t" style="left:2.50px;top:340.10px;font-size:13px;color:#bbbbbb;transform:rotate(-90deg);transform-origin:0 0;letter-spacing:-0.150px;">Captures</span>
<span class="t" style="left:2.50px;top:509.60px;font-size:13px;color:#bbbbbb;transform:rotate(-90deg);transform-origin:0 0;letter-spacing:-0.066px;"><u>2</u>: Favorites</span>
<span class="t" style="left:2.50px;top:629.20px;font-size:13px;color:#bbbbbb;transform:rotate(-90deg);transform-origin:0 0;letter-spacing:0.073px;">Build Variants</span>
<svg style="left:6px;top:146px;" width="13" height="15" viewBox="0 0 13 15"><circle cx="6.5" cy="6.8" r="5.9" fill="#7cc242"/><path d="M6.5 3L8 5.4L6.5 8.6L5 5.4z" fill="#8c8f8a" stroke="#70746e" stroke-width="0.5"/><path d="M6 7L2.2 13.8M7 7L10.8 13.8" stroke="#f2f2f2" stroke-width="1.5" fill="none"/><path d="M3.8 10.6Q6.5 12.2 9.2 10.6" stroke="#f2f2f2" stroke-width="1.1" fill="none"/></svg>
<svg style="left:5px;top:252px;" width="15" height="15" viewBox="0 0 15 15"><g stroke="#a8a8a8" stroke-width="1"><path d="M3.3 3.4H11.4M3.3 3.4L7.4 11.4M11.4 3.4L7.4 11.4"/></g><circle cx="3.3" cy="3.4" r="2.6" fill="#4a9fd8"/><circle cx="11.4" cy="3.4" r="2.6" fill="#e0605d"/><circle cx="7.4" cy="11.5" r="2.6" fill="#d9983f"/></svg>
<svg style="left:5px;top:343px;" width="15" height="15" viewBox="0 0 15 15"><circle cx="7.5" cy="8.4" r="4.8" fill="#6ec0f0" stroke="#8c8c8c" stroke-width="1.4"/><rect x="6.9" y="0.8" width="1.3" height="2.6" fill="#9c9c9c"/><path d="M1.6 2.8L3.8 5" stroke="#9c9c9c" stroke-width="1.3"/><path d="M7.4 8.6L9 6.4" stroke="#4a4a4a" stroke-width="1"/></svg>
<svg style="left:6px;top:513px;" width="13" height="13" viewBox="0 0 13 13"><path d="M6.5 0.2L8.4 4.6L13 5L9.5 8.1L10.6 12.8L6.5 10.3L2.4 12.8L3.5 8.1L0 5L4.6 4.6z" fill="#eba537"/></svg>
<svg style="left:6px;top:632.6px;" width="12" height="13.3" viewBox="0 0 14 15.5"><g fill="#97c023"><path d="M3.2 5.6a3.8 3.6 0 0 1 7.6 0z"/><rect x="3.2" y="6.2" width="7.6" height="6.2" rx="0.8"/><rect x="0.6" y="6.2" width="2" height="5" rx="1"/><rect x="11.4" y="6.2" width="2" height="5" rx="1"/><rect x="4.4" y="11.5" width="2" height="3.6" rx="1"/><rect x="7.6" y="11.5" width="2" height="3.6" rx="1"/><path d="M4.2 2.6L3.2 0.8M9.8 2.6L10.8 0.8" stroke="#97c023" stroke-width="1"/></g><circle cx="5.3" cy="4" r="0.55" fill="#3c3f41"/><circle cx="8.7" cy="4" r="0.55" fill="#3c3f41"/></svg>
<div style="left:24px;top:80px;width:327px;height:26px;background:#424d5f;"></div>
<div style="left:24px;top:80px;width:327px;height:1px;background:#4c586b;"></div>
<div style="left:351px;top:80px;width:1px;height:580px;background:#2b2b2b;"></div>
<svg style="left:33px;top:85px;" width="16" height="13" viewBox="0 0 16 13"><rect x="5.2" y="0.6" width="9.6" height="7.6" fill="#2f5c7d" stroke="#3f90c8" stroke-width="1.1"/><path d="M0.8 3H6.6L8.6 5V12.4H0.8z" fill="#9c9c9c"/><rect x="3" y="6.2" width="3.4" height="1" fill="#424d5f"/><rect x="3" y="8" width="3.4" height="1" fill="#424d5f"/><rect x="3" y="9.8" width="3.4" height="1" fill="#424d5f"/><rect x="3" y="6.2" width="1" height="4.6" fill="#424d5f"/></svg>
<span class="t" style="left:52.90px;top:82.75px;font-size:14px;color:#bbbbbb;letter-spacing:-0.396px;">Project</span>
<svg style="left:235px;top:90.6px;" width="7.2" height="4.8" viewBox="0 0 7.2 4.8"><path d="M0 0H7.2L3.6 4.8z" fill="#c8ccd0"/></svg>
<div style="left:248px;top:81px;width:1px;height:24px;background:#3a4454;"></div>
<svg style="left:253px;top:86px;" width="13" height="12" viewBox="0 0 13 12"><circle cx="6.25" cy="6" r="5.1" fill="none" stroke="#a0a5ab" stroke-width="1.7"/><path d="M6.25 0.4V3.6M6.25 8.4V11.6M0.6 6H3.8M8.7 6H11.9" stroke="#a0a5ab" stroke-width="2.3"/></svg>
<svg style="left:274.5px;top:85.5px;" width="12" height="14" viewBox="0 0 12 14"><path d="M0 4.8H12M0 8.4H12" stroke="#a0a5ab" stroke-width="1.1"/><path d="M6 0V4M6 13.4V9.2" stroke="#a0a5ab" stroke-width="1.1"/><path d="M3.8 1.6L6 4L8.2 1.6M3.8 11.6L6 9.2L8.2 11.6" stroke="#a0a5ab" stroke-width="1.1" fill="none"/></svg>
<div style="left:295px;top:84px;width:2px;height:16px;background:#7a8290;background:linear-gradient(#4a5567,#8e97a6 45%,#8e97a6 60%,#4a5567);"></div>
<svg style="left:304px;top:86px;" width="12" height="12" viewBox="0 0 12 12"><g fill="#a0a5ab"><circle cx="6" cy="6" r="4.2"/><rect x="4.8" y="-0.2" width="2.4" height="3" transform="rotate(0 6 6)"/><rect x="4.8" y="-0.2" width="2.4" height="3" transform="rotate(45 6 6)"/><rect x="4.8" y="-0.2" width="2.4" height="3" transform="rotate(90 6 6)"/><rect x="4.8" y="-0.2" width="2.4" height="3" transform="rotate(135 6 6)"/><rect x="4.8" y="-0.2" width="2.4" height="3" transform="rotate(180 6 6)"/><rect x="4.8" y="-0.2" width="2.4" height="3" transform="rotate(225 6 6)"/><rect x="4.8" y="-0.2" width="2.4" height="3" transform="rotate(270 6 6)"/><rect x="4.8" y="-0.2" width="2.4" height="3" transform="rotate(315 6 6)"/></g><circle cx="6" cy="6" r="1.8" fill="#424d5f"/></svg>
<svg style="left:318px;top:91px;" width="5" height="3" viewBox="0 0 5 3"><path d="M0 0H5L2.5 3z" fill="#a0a5ab"/></svg>
<svg style="left:332px;top:86px;" width="13" height="13" viewBox="0 0 13 13"><rect x="0.5" y="1.2" width="2.2" height="10.6" fill="none" stroke="#a0a5ab" stroke-width="1"/><path d="M4.6 4.6H12" stroke="#a0a5ab" stroke-width="1.1"/><path d="M7.2 2.2L4.8 4.6L7.2 7" stroke="#a0a5ab" stroke-width="1.1" fill="none"/></svg>
<div style="left:24px;top:105px;width:327px;height:23px;background:#0d293e;"></div>
<div style="left:24px;top:128px;width:327px;height:23px;background:#4a4740;"></div>
<svg style="left:26.8px;top:113.0px;" width="9.4" height="8" viewBox="0 0 9.4 8"><path d="M0 0H9.4L4.7 8z" fill="#b2b4b6"/></svg>
<svg style="left:47px;top:110px;" width="16" height="14" viewBox="0 0 16 14"><path d="M0 0.5h5.6l2 2H14V12H0z" fill="#c9a063"/><rect x="2" y="4.3" width="10" height="5.7" fill="#0d293e"/><path d="M6 6H14.4V10.6A3.6 3.4 0 0 1 6.6 12z" fill="#0d293e"/><path d="M6.9 6.9H13.3V9.6A3.2 3.4 0 0 1 6.9 9.6z" fill="#62b2e6"/><path d="M13.2 7.4H15V9.6H13" fill="none" stroke="#62b2e6" stroke-width="1"/></svg>
<span class="t" style="left:65.10px;top:106.50px;font-size:15px;color:#d4d4d4;font-weight:700;letter-spacing:-0.077px;">hellowworld</span>
<span class="t" style="left:154.70px;top:106.50px;font-size:15px;color:#9aa7b0;letter-spacing:0.204px;">(D:\android_AS\hellowworld)</span>
<svg style="left:48px;top:134.5px;" width="8" height="10" viewBox="0 0 8 10"><path d="M0 0L8 5L0 10z" fill="#a4a6a8"/></svg>
<svg style="left:67px;top:133.0px;" width="14" height="12" viewBox="0 0 14 12"><path d="M0 0.5h5.6l2 2H14V12H0z" fill="#e2726c"/><rect x="2" y="4.3" width="10" height="5.7" fill="#4a4740"/></svg>
<span class="t" style="left:84.90px;top:129.50px;font-size:15px;color:#bbbbbb;">.gradle</span>
<svg style="left:48px;top:157.5px;" width="8" height="10" viewBox="0 0 8 10"><path d="M0 0L8 5L0 10z" fill="#a4a6a8"/></svg>
<svg style="left:67px;top:156.0px;" width="14" height="12" viewBox="0 0 14 12"><path d="M0 0.5h5.6l2 2H14V12H0z" fill="#c9a063"/><rect x="2" y="4.3" width="10" height="5.7" fill="#3c3f41"/></svg>
<span class="t" style="left:84.90px;top:152.50px;font-size:15px;color:#bbbbbb;letter-spacing:-0.100px;">.idea</span>
<svg style="left:48px;top:180.5px;" width="8" height="10" viewBox="0 0 8 10"><path d="M0 0L8 5L0 10z" fill="#a4a6a8"/></svg>
<svg style="left:67px;top:179.0px;" width="16" height="15" viewBox="0 0 16 15"><path d="M0 0.5h5.6l2 2H14V12H0z" fill="#c9a063"/><rect x="2" y="4.3" width="10" height="5.7" fill="#3c3f41"/><rect x="7.6" y="3.4" width="7.4" height="11" fill="#3c3f41"/><rect x="8.6" y="4.2" width="5.8" height="9.8" rx="0.8" fill="#a8a8a8"/><rect x="9.7" y="5.6" width="3.6" height="5.4" fill="#7fc21f"/><rect x="10.2" y="12" width="2.6" height="0.9" fill="#5a5a5a"/></svg>
<span class="t" style="left:84.90px;top:175.50px;font-size:15px;color:#bbbbbb;font-weight:700;letter-spacing:-0.300px;">app</span>
<svg style="left:48px;top:203.5px;" width="8" height="10" viewBox="0 0 8 10"><path d="M0 0L8 5L0 10z" fill="#a4a6a8"/></svg>
<svg style="left:67px;top:202.0px;" width="14" height="12" viewBox="0 0 14 12"><path d="M0 0.5h5.6l2 2H14V12H0z" fill="#c9a063"/><rect x="2" y="4.3" width="10" height="5.7" fill="#3c3f41"/></svg>
<span class="t" style="left:84.90px;top:198.50px;font-size:15px;color:#bbbbbb;letter-spacing:0.500px;">build</span>
<svg style="left:48px;top:226.5px;" width="8" height="10" viewBox="0 0 8 10"><path d="M0 0L8 5L0 10z" fill="#a4a6a8"/></svg>
<svg style="left:67px;top:225.0px;" width="14" height="12" viewBox="0 0 14 12"><path d="M0 0.5h5.6l2 2H14V12H0z" fill="#c9a063"/><rect x="2" y="4.3" width="10" height="5.7" fill="#3c3f41"/></svg>
<span class="t" style="left:84.90px;top:221.50px;font-size:15px;color:#bbbbbb;letter-spacing:0.400px;">gradle</span>
<svg style="left:68px;top:245.7px;" width="14" height="16" viewBox="0 0 14 16"><path d="M0.9 0.9H7.6L10.1 3.4V14.1H0.9z" fill="none" stroke="#9e9e9e" stroke-width="1.8"/><path d="M7.2 1.2V3.8H10" fill="none" stroke="#c4c4c4" stroke-width="0.9"/><g fill="#4a9fd8"><rect x="3.1" y="5.6" width="4.8" height="1.2"/><rect x="3.1" y="7.9" width="4.8" height="1.2"/><rect x="3.1" y="10.2" width="4.8" height="1.2"/></g></svg>
<span class="t" style="left:84.90px;top:244.50px;font-size:15px;color:#bbbbbb;letter-spacing:0.250px;">.gitignore</span>
<svg style="left:67px;top:270.5px;" width="14" height="14" viewBox="0 0 14 14"><path d="M12.64 7.79A5.7 5.7 0 1 1 3.49 2.51" fill="none" stroke="#8fcf50" stroke-width="2.6"/><path d="M5.24 1.58A5.7 5.7 0 0 1 12.58 5.81" fill="none" stroke="#1faa50" stroke-width="2.6"/><circle cx="7" cy="7" r="2.7" fill="#1faa50"/></svg>
<span class="t" style="left:84.90px;top:267.50px;font-size:15px;color:#bbbbbb;letter-spacing:0.150px;">build.gradle</span>
<svg style="left:68px;top:291.7px;" width="14" height="16" viewBox="0 0 14 16"><path d="M0.9 0.9H7.6L10.1 3.4V14.1H0.9z" fill="none" stroke="#9e9e9e" stroke-width="1.8"/><path d="M7.2 1.2V3.8H10" fill="none" stroke="#c4c4c4" stroke-width="0.9"/><rect x="3" y="5.6" width="11" height="10" fill="#3c3f41"/><rect x="3.6" y="9.4" width="2.9" height="5.6" fill="#f26b6b"/><rect x="6.9" y="7.4" width="2.9" height="7.6" fill="#f2a53c"/><rect x="10.2" y="5.8" width="2.9" height="9.2" fill="#4fd357"/></svg>
<span class="t" style="left:84.90px;top:290.50px;font-size:15px;color:#bbbbbb;letter-spacing:0.400px;">gradle.properties</span>
<svg style="left:68px;top:314.7px;" width="14" height="16" viewBox="0 0 14 16"><path d="M0.9 0.9H7.6L10.1 3.4V14.1H0.9z" fill="none" stroke="#9e9e9e" stroke-width="1.8"/><path d="M7.2 1.2V3.8H10" fill="none" stroke="#c4c4c4" stroke-width="0.9"/><g fill="#4a9fd8"><rect x="3.1" y="5.6" width="4.8" height="1.2"/><rect x="3.1" y="7.9" width="4.8" height="1.2"/><rect x="3.1" y="10.2" width="4.8" height="1.2"/></g></svg>
<span class="t" style="left:84.90px;top:313.50px;font-size:15px;color:#bbbbbb;letter-spacing:0.400px;">gradlew</span>
<svg style="left:68px;top:337.7px;" width="14" height="16" viewBox="0 0 14 16"><path d="M0.9 0.9H7.6L10.1 3.4V14.1H0.9z" fill="none" stroke="#9e9e9e" stroke-width="1.8"/><path d="M7.2 1.2V3.8H10" fill="none" stroke="#c4c4c4" stroke-width="0.9"/><g fill="#4a9fd8"><rect x="3.1" y="5.6" width="4.8" height="1.2"/><rect x="3.1" y="7.9" width="4.8" height="1.2"/><rect x="3.1" y="10.2" width="4.8" height="1.2"/></g></svg>
<span class="t" style="left:84.90px;top:336.50px;font-size:15px;color:#bbbbbb;letter-spacing:0.400px;">gradlew.bat</span>
<svg style="left:68px;top:360.7px;" width="14" height="16" viewBox="0 0 14 16"><path d="M0.9 0.9H7.6L10.1 3.4V14.1H0.9z" fill="none" stroke="#9e9e9e" stroke-width="1.8"/><path d="M7.2 1.2V3.8H10" fill="none" stroke="#c4c4c4" stroke-width="0.9"/><rect x="4.8" y="8" width="8.6" height="7.6" fill="#3c3f41"/><rect x="5.6" y="8.8" width="7.4" height="6.6" fill="#1c1c1c"/><rect x="7" y="12.6" width="2.6" height="1.1" fill="#ececec"/></svg>
<span class="t" style="left:84.90px;top:359.50px;font-size:15px;color:#bbbbbb;letter-spacing:0.200px;">hellowworld.iml</span>
<svg style="left:68px;top:383.7px;" width="14" height="16" viewBox="0 0 14 16"><path d="M0.9 0.9H7.6L10.1 3.4V14.1H0.9z" fill="none" stroke="#9e9e9e" stroke-width="1.8"/><path d="M7.2 1.2V3.8H10" fill="none" stroke="#c4c4c4" stroke-width="0.9"/><rect x="3" y="5.6" width="11" height="10" fill="#3c3f41"/><rect x="3.6" y="9.4" width="2.9" height="5.6" fill="#f26b6b"/><rect x="6.9" y="7.4" width="2.9" height="7.6" fill="#f2a53c"/><rect x="10.2" y="5.8" width="2.9" height="9.2" fill="#4fd357"/></svg>
<span class="t" style="left:84.90px;top:382.50px;font-size:15px;color:#bbbbbb;letter-spacing:-0.200px;">local.properties</span>
<svg style="left:67px;top:408.5px;" width="14" height="14" viewBox="0 0 14 14"><path d="M12.64 7.79A5.7 5.7 0 1 1 3.49 2.51" fill="none" stroke="#8fcf50" stroke-width="2.6"/><path d="M5.24 1.58A5.7 5.7 0 0 1 12.58 5.81" fill="none" stroke="#1faa50" stroke-width="2.6"/><circle cx="7" cy="7" r="2.7" fill="#1faa50"/></svg>
<span class="t" style="left:84.90px;top:405.50px;font-size:15px;color:#bbbbbb;letter-spacing:0.150px;">settings.gradle</span>
<svg style="left:27px;top:433.5px;" width="8" height="10" viewBox="0 0 8 10"><path d="M0 0L8 5L0 10z" fill="#a4a6a8"/></svg>
<svg style="left:46.6px;top:431.0px;" width="15" height="14" viewBox="0 0 15 14"><g><rect x="0.5" y="3.6" width="6.3" height="9.8" fill="#8a8a8a"/><path d="M2.6 3.6V13.4M4.7 3.6V13.4M0.5 6H6.8M0.5 8.4H6.8M0.5 10.8H6.8" stroke="#5a5a5a" stroke-width="0.5"/><rect x="6.6" y="0.6" width="4" height="12.8" fill="#ea8b86"/><rect x="10.8" y="5" width="3.6" height="8.4" fill="#74b9ea"/><path d="M6.6 4H10.6M6.6 7.2H10.6M6.6 10.4H10.6M10.8 8H14.4M10.8 10.8H14.4" stroke="#3c3f41" stroke-width="0.4" opacity="0.6"/></g></svg>
<span class="t" style="left:64.70px;top:428.50px;font-size:15px;color:#bbbbbb;letter-spacing:-0.300px;">External Libraries</span>
<div style="left:25px;top:648px;width:326px;height:10px;background:#565859;border-radius:5px;background:linear-gradient(#5b5d5f,#515355);"></div>
<div style="left:352px;top:80px;width:703px;height:26px;background:#3c3f41;"></div>
<div style="left:352px;top:105px;width:703px;height:1px;background:#323232;"></div>
<div style="left:352px;top:106px;width:703px;height:3px;background:#515658;"></div>
<div style="left:680px;top:80px;width:75px;height:26px;background:#515658;"></div>
<div style="left:515px;top:80px;width:1px;height:25px;background:#2b2b2b;"></div>
<div style="left:679px;top:80px;width:1px;height:25px;background:#2b2b2b;"></div>
<div style="left:755px;top:80px;width:1px;height:25px;background:#2b2b2b;"></div>
<svg style="left:362px;top:85px;" width="14" height="15" viewBox="0 0 14 15"><path d="M1 1H7.6L10 3.4V14H1z" fill="none" stroke="#a6a6a6" stroke-width="2"/><rect x="6.6" y="2.2" width="1.6" height="1.6" fill="#c8c8c8"/><rect x="0" y="4.2" width="13.6" height="8.6" fill="#3c3f41"/><rect x="0" y="5" width="13.2" height="7.1" fill="#f9b145"/><path d="M5.4 6.4L3.4 8.5L5.4 10.6M7.6 6.4L9.6 8.5L7.6 10.6" fill="none" stroke="#3c3f41" stroke-width="1.3"/></svg>
<span class="t" style="left:379.10px;top:83.40px;font-size:15px;color:#bbbbbb;letter-spacing:-0.050px;">activity_main.xml</span>
<svg style="left:500px;top:89.6px;" width="7" height="7" viewBox="0 0 7 7"><path d="M0.6 0.6L6.4 6.4M6.4 0.6L0.6 6.4" stroke="#7f8284" stroke-width="1.5"/></svg>
<svg style="left:525px;top:86px;" width="14" height="14" viewBox="0 0 14 14"><circle cx="7" cy="7" r="7" fill="#8fccf5"/><circle cx="7" cy="7" r="6" fill="#aedbf8"/><path d="M9 4.7H7A2.3 2.3 0 0 0 7 9.3H9" fill="none" stroke="#2e3238" stroke-width="1.5"/></svg>
<span class="t" style="left:542.90px;top:83.40px;font-size:15px;color:#bbbbbb;letter-spacing:0.263px;">MainActivity.java</span>
<svg style="left:664.5px;top:89.6px;" width="7" height="7" viewBox="0 0 7 7"><path d="M0.6 0.6L6.4 6.4M6.4 0.6L0.6 6.4" stroke="#7f8284" stroke-width="1.5"/></svg>
<svg style="left:689px;top:86px;" width="14" height="14" viewBox="0 0 14 14"><path d="M12.64 7.79A5.7 5.7 0 1 1 3.49 2.51" fill="none" stroke="#8fcf50" stroke-width="2.6"/><path d="M5.24 1.58A5.7 5.7 0 0 1 12.58 5.81" fill="none" stroke="#1faa50" stroke-width="2.6"/><circle cx="7" cy="7" r="2.7" fill="#1faa50"/></svg>
<span class="t" style="left:706.90px;top:83.40px;font-size:15px;color:#bbbbbb;letter-spacing:0.684px;">app</span>
<svg style="left:740px;top:89.6px;" width="7" height="7" viewBox="0 0 7 7"><path d="M0.6 0.6L6.4 6.4M6.4 0.6L0.6 6.4" stroke="#8f9294" stroke-width="1.5"/></svg>
<div style="left:352px;top:109px;width:703px;height:551px;background:#2b2b2b;"></div>
<div style="left:352px;top:109px;width:34px;height:551px;background:#313335;"></div>
<div style="left:386px;top:109px;width:1px;height:551px;background:#555555;"></div>
<div style="left:424px;top:585px;width:320px;height:19px;background:#214283;"></div>
<div style="left:458px;top:395px;width:1px;height:38px;background:#3b3b3b;"></div>
<div class="code" style="left:392px;top:111px;"><span style="color:#a9b7c6;">apply </span><span style="color:#6a8759;">plugin</span><span style="color:#a9b7c6;">: </span><span style="color:#6a8759;">'com.android.application'</span></div>
<div class="code" style="left:392px;top:149px;"><span style="color:#a9b7c6;">android {</span></div>
<div class="code" style="left:392px;top:168px;"><span style="color:#a9b7c6;">    compileSdkVersion </span><span style="color:#6897bb;">24</span></div>
<div class="code" style="left:392px;top:187px;"><span style="color:#a9b7c6;">    buildToolsVersion </span><span style="color:#6a8759;">"24.0.1"</span></div>
<div class="code" style="left:392px;top:225px;"><span style="color:#a9b7c6;">    defaultConfig {</span></div>
<div class="code" style="left:392px;top:244px;"><span style="color:#a9b7c6;">        </span><span style="color:#9876aa;">applicationId </span><span style="color:#6a8759;">"com.nst.com.hellowworld"</span></div>
<div class="code" style="left:392px;top:263px;"><span style="color:#a9b7c6;">        minSdkVersion </span><span style="color:#6897bb;">19</span></div>
<div class="code" style="left:392px;top:282px;"><span style="color:#a9b7c6;">        targetSdkVersion </span><span style="color:#6897bb;">24</span></div>
<div class="code" style="left:392px;top:301px;"><span style="color:#a9b7c6;">        </span><span style="color:#9876aa;">versionCode </span><span style="color:#6897bb;">1</span></div>
<div class="code" style="left:392px;top:320px;"><span style="color:#a9b7c6;">        </span><span style="color:#9876aa;">versionName </span><span style="color:#6a8759;">"1.0"</span></div>
<div class="code" style="left:392px;top:339px;"><span style="color:#a9b7c6;">    }</span></div>
<div class="code" style="left:392px;top:358px;"><span style="color:#a9b7c6;">    buildTypes {</span></div>
<div class="code" style="left:392px;top:377px;"><span style="color:#a9b7c6;">        release {</span></div>
<div class="code" style="left:392px;top:396px;"><span style="color:#a9b7c6;">            </span><span style="color:#9876aa;">minifyEnabled </span><span style="color:#cc7832;">false</span></div>
<div class="code" style="left:392px;top:415px;"><span style="color:#a9b7c6;">            proguardFiles </span><span style="color:#9a9a9a;text-decoration:underline;text-decoration-color:#8c8c8c;text-decoration-skip-ink:none;text-underline-offset:1.5px;text-decoration-thickness:1px;">getDefaultProguardFile</span><span style="color:#a9b7c6;">(</span><span style="color:#6a8759;">'proguard-android.txt'</span><span style="color:#a9b7c6;">), </span><span style="color:#6a8759;">'proguard-rules.pro'</span></div>
<div class="code" style="left:392px;top:434px;"><span style="color:#a9b7c6;">        }</span></div>
<div class="code" style="left:392px;top:453px;"><span style="color:#a9b7c6;">    }</span></div>
<div class="code" style="left:392px;top:472px;"><span style="color:#a9b7c6;">}</span></div>
<div class="code" style="left:392px;top:510px;"><span style="color:#a9b7c6;">dependencies {</span></div>
<div class="code" style="left:392px;top:529px;"><span style="color:#a9b7c6;">    compile fileTree(</span><span style="color:#6a8759;">dir</span><span style="color:#a9b7c6;">: </span><span style="color:#6a8759;">'libs'</span><span style="color:#a9b7c6;">, </span><span style="color:#6a8759;">include</span><span style="color:#a9b7c6;">: </span><span style="color:#a9b7c6;">[</span><span style="color:#6a8759;">'*.jar'</span><span style="color:#a9b7c6;">])</span></div>
<div class="code" style="left:392px;top:548px;"><span style="color:#a9b7c6;">    testCompile </span><span style="color:#6a8759;">'junit:junit:4.12'</span></div>
<div class="code" style="left:392px;top:567px;"><span style="color:#a9b7c6;">    compile </span><span style="color:#6a8759;">'com.android.support:appcompat-v7:24.1.0'</span></div>
<div class="code" style="left:392px;top:586px;"><span style="color:#a9b7c6;">    compile files(</span><span style="color:#6a8759;">'libs/fastjson-1.2.5.jar'</span><span style="color:#a9b7c6;">)</span></div>
<div class="code" style="left:392px;top:605px;"><span style="color:#a9b7c6;">}</span></div>
<div style="left:0px;top:660px;width:1055px;height:43px;background:#3c3f41;"></div>
<div style="left:0px;top:659px;width:352px;height:1px;background:#2b2b2b;"></div>
<div style="left:0px;top:660px;width:1055px;height:1px;background:#4f5254;"></div>
<div style="left:0px;top:683px;width:1055px;height:1px;background:#4a4d4f;"></div>
<svg style="left:33px;top:666px;" width="12" height="12" viewBox="0 0 12 12"><rect x="0.5" y="0.5" width="11" height="11" fill="#f6c887" stroke="#e0a04a" stroke-width="1"/><g fill="#8a6a3a"><rect x="2.4" y="3" width="3" height="1"/><rect x="6.2" y="3" width="3.4" height="1"/><rect x="2.4" y="5.4" width="2" height="1"/><rect x="5.2" y="5.4" width="4.4" height="1"/><rect x="2.4" y="7.8" width="3" height="1"/><rect x="6.2" y="7.8" width="3.4" height="1"/></g></svg>
<span class="t" style="left:49.30px;top:662.50px;font-size:13px;color:#bbbbbb;letter-spacing:-0.030px;"><u>0</u>: Messages</span>
<svg style="left:9px;top:688px;" width="14" height="13" viewBox="0 0 14 13"><rect x="0.6" y="0.6" width="12.8" height="10.6" fill="#616365" stroke="#a4a6a8" stroke-width="1.2"/><rect x="0" y="11.6" width="14" height="1.2" fill="#c4c4c4"/></svg>
<span class="t" style="left:31.10px;top:683.90px;font-size:15px;color:#bbbbbb;letter-spacing:0.067px;">Gradle build finished in 5s 712ms (5 minutes ago)</span>
<span class="t" style="left:924.30px;top:683.90px;font-size:15px;color:#bbbbbb;letter-spacing:-0.164px;">40 chars</span>
<span class="t" style="left:999.90px;top:683.90px;font-size:15px;color:#bbbbbb;letter-spacing:-0.668px;">26:5</span>
<span class="t" style="left:1037.70px;top:683.90px;font-size:15px;color:#bbbbbb;letter-spacing:-1.500px;">CRLF</span>
<div style="left:125px;top:117px;width:321px;height:575px;background:#3c3f41;box-sizing:border-box;border:1px solid #555555;"></div>
<span class="t" style="left:149.70px;top:120.10px;font-size:15px;color:#bbbbbb;letter-spacing:0.292px;">New</span>
<svg style="left:436px;top:125px;" width="5" height="9" viewBox="0 0 5 9"><path d="M0 0L5 4.5L0 9z" fill="#b0b0b0"/></svg>
<div style="left:126px;top:142px;width:319px;height:1px;background:#515151;"></div>
<span class="t" style="left:149.70px;top:147.10px;font-size:15px;color:#bbbbbb;letter-spacing:0.328px;">Cu<u>t</u></span>
<span class="t" style="left:391.00px;top:147.10px;font-size:15px;color:#bbbbbb;letter-spacing:0.161px;">Ctrl+X</span>
<svg style="left:130px;top:148.5px;" width="14" height="15" viewBox="0 0 14 15"><g stroke="#9c9c9c" stroke-width="1.1" fill="none"><path d="M1.4 0.2L8.6 10.2"/><path d="M12.6 0.2L5.4 10.2"/></g><rect x="5.9" y="7.2" width="2.2" height="2.2" fill="#3c3f41" stroke="#9c9c9c" stroke-width="0.8"/><circle cx="2.9" cy="12.1" r="2.1" fill="none" stroke="#b587c9" stroke-width="2"/><circle cx="11.1" cy="12.1" r="2.1" fill="none" stroke="#b587c9" stroke-width="2"/></svg>
<span class="t" style="left:149.70px;top:170.10px;font-size:15px;color:#bbbbbb;letter-spacing:-0.077px;"><u>C</u>opy</span>
<span class="t" style="left:391.00px;top:170.10px;font-size:15px;color:#bbbbbb;">Ctrl+C</span>
<svg style="left:130px;top:171.5px;" width="14" height="16" viewBox="0 0 14 16"><path d="M4.7 0.8H10.0L13.2 4.0V13.200000000000001H4.7z" fill="#3c3f41" stroke="#8f8f8f" stroke-width="1.8" stroke-linejoin="miter"/><path d="M10.0 0.8V4.0H13.2" fill="none" stroke="#8f8f8f" stroke-width="1.26"/><path d="M0.8 2.8H6.1000000000000005L9.3 6.0V15.2H0.8z" fill="#3c3f41" stroke="#4a9fd8" stroke-width="1.8" stroke-linejoin="miter"/><path d="M6.1000000000000005 2.8V6.0H9.3" fill="none" stroke="#4a9fd8" stroke-width="1.26"/></svg>
<span class="t" style="left:149.70px;top:193.10px;font-size:15px;color:#bbbbbb;letter-spacing:-0.093px;">C<u>o</u>py Path</span>
<span class="t" style="left:349.70px;top:193.10px;font-size:15px;color:#bbbbbb;letter-spacing:0.227px;">Ctrl+Shift+C</span>
<span class="t" style="left:149.70px;top:216.10px;font-size:15px;color:#bbbbbb;letter-spacing:-0.086px;">Copy as Plain Text</span>
<span class="t" style="left:149.70px;top:239.10px;font-size:15px;color:#bbbbbb;letter-spacing:-0.208px;">Cop<u>y</u> Reference</span>
<span class="t" style="left:320.70px;top:239.10px;font-size:15px;color:#bbbbbb;letter-spacing:0.349px;">Ctrl+Alt+Shift+C</span>
<span class="t" style="left:149.70px;top:262.10px;font-size:15px;color:#bbbbbb;letter-spacing:-0.490px;"><u>P</u>aste</span>
<span class="t" style="left:391.00px;top:262.10px;font-size:15px;color:#bbbbbb;letter-spacing:0.161px;">Ctrl+V</span>
<svg style="left:130px;top:263.0px;" width="14" height="16" viewBox="0 0 14 16"><rect x="4" y="1" width="10" height="11.5" fill="#d9a343"/><rect x="7" y="0" width="4" height="1.6" fill="#c9c9c9"/><rect x="6" y="1.2" width="6" height="1" fill="#3c3f41" opacity="0.5"/><rect x="0" y="3.2" width="9.8" height="13" fill="#3c3f41"/><path d="M0.8 4H5.6000000000000005L8.8 7.2V15.2H0.8z" fill="#3c3f41" stroke="#8f8f8f" stroke-width="1.8" stroke-linejoin="miter"/><path d="M5.6000000000000005 4V7.2H8.8" fill="none" stroke="#8f8f8f" stroke-width="1.26"/></svg>
<div style="left:126px;top:284px;width:319px;height:1px;background:#515151;"></div>
<span class="t" style="left:149.70px;top:289.10px;font-size:15px;color:#bbbbbb;letter-spacing:-0.362px;">Find <u>U</u>sages</span>
<span class="t" style="left:388.40px;top:289.10px;font-size:15px;color:#bbbbbb;letter-spacing:0.344px;">Alt+F7</span>
<span class="t" style="left:149.70px;top:312.10px;font-size:15px;color:#bbbbbb;letter-spacing:-0.119px;">Find in <u>P</u>ath...</span>
<span class="t" style="left:352.00px;top:312.10px;font-size:15px;color:#bbbbbb;letter-spacing:0.170px;">Ctrl+Shift+F</span>
<span class="t" style="left:149.70px;top:335.10px;font-size:15px;color:#bbbbbb;letter-spacing:-0.200px;">Repl<u>a</u>ce in Path...</span>
<span class="t" style="left:349.70px;top:335.10px;font-size:15px;color:#bbbbbb;letter-spacing:0.227px;">Ctrl+Shift+R</span>
<span class="t" style="left:149.70px;top:358.10px;font-size:15px;color:#bbbbbb;letter-spacing:0.071px;">Analy<u>z</u>e</span>
<svg style="left:436px;top:363px;" width="5" height="9" viewBox="0 0 5 9"><path d="M0 0L5 4.5L0 9z" fill="#b0b0b0"/></svg>
<div style="left:126px;top:380px;width:319px;height:1px;background:#515151;"></div>
<span class="t" style="left:149.70px;top:385.10px;font-size:15px;color:#bbbbbb;"><u>R</u>efactor</span>
<svg style="left:436px;top:390px;" width="5" height="9" viewBox="0 0 5 9"><path d="M0 0L5 4.5L0 9z" fill="#b0b0b0"/></svg>
<div style="left:126px;top:407px;width:319px;height:1px;background:#515151;"></div>
<span class="t" style="left:149.70px;top:412.10px;font-size:15px;color:#bbbbbb;letter-spacing:0.025px;">Add to F<u>a</u>vorites</span>
<svg style="left:436px;top:417px;" width="5" height="9" viewBox="0 0 5 9"><path d="M0 0L5 4.5L0 9z" fill="#b0b0b0"/></svg>
<span class="t" style="left:149.70px;top:435.10px;font-size:15px;color:#bbbbbb;letter-spacing:0.089px;">Show Image Thumbnails</span>
<span class="t" style="left:350.70px;top:435.10px;font-size:15px;color:#bbbbbb;letter-spacing:0.288px;">Ctrl+Shift+T</span>
<div style="left:126px;top:457px;width:319px;height:1px;background:#515151;"></div>
<span class="t" style="left:149.70px;top:462.10px;font-size:15px;color:#bbbbbb;letter-spacing:-0.018px;"><u>R</u>eformat Code</span>
<span class="t" style="left:363.60px;top:462.10px;font-size:15px;color:#bbbbbb;letter-spacing:0.400px;">Ctrl+Alt+L</span>
<span class="t" style="left:149.70px;top:485.10px;font-size:15px;color:#bbbbbb;letter-spacing:0.223px;">Optimi<u>z</u>e Imports</span>
<span class="t" style="left:359.70px;top:485.10px;font-size:15px;color:#bbbbbb;letter-spacing:0.463px;">Ctrl+Alt+O</span>
<div style="left:126px;top:507px;width:319px;height:1px;background:#515151;"></div>
<span class="t" style="left:149.70px;top:512.10px;font-size:15px;color:#bbbbbb;letter-spacing:-0.025px;">Local <u>H</u>istory</span>
<svg style="left:436px;top:517px;" width="5" height="9" viewBox="0 0 5 9"><path d="M0 0L5 4.5L0 9z" fill="#b0b0b0"/></svg>
<span class="t" style="left:149.70px;top:535.10px;font-size:15px;color:#bbbbbb;letter-spacing:0.266px;">Synchronize 'hellowworld'</span>
<svg style="left:130px;top:537.5px;" width="14" height="14" viewBox="0 0 14 14"><g fill="none" stroke="#3d96cf" stroke-width="2.5"><path d="M6.3 1.45A5.6 5.6 0 0 0 2.15 9.8"/><path d="M7.7 12.55A5.6 5.6 0 0 0 11.85 4.2"/></g><path d="M7.5 0.3H14L11.9 5.8z" fill="#3d96cf"/><path d="M6.5 13.7H0L2.1 8.2z" fill="#3d96cf"/></svg>
<div style="left:126px;top:557px;width:319px;height:1px;background:#515151;"></div>
<span class="t" style="left:149.70px;top:562.10px;font-size:15px;color:#bbbbbb;letter-spacing:0.027px;">Show in Explorer</span>
<div style="left:126px;top:584px;width:319px;height:1px;background:#515151;"></div>
<span class="t" style="left:149.70px;top:589.10px;font-size:15px;color:#bbbbbb;letter-spacing:-0.150px;">File <u>P</u>ath</span>
<span class="t" style="left:347.50px;top:589.10px;font-size:15px;color:#bbbbbb;letter-spacing:0.200px;">Ctrl+Alt+F12</span>
<div style="left:126px;top:611px;width:319px;height:1px;background:#515151;"></div>
<span class="t" style="left:149.70px;top:616.10px;font-size:15px;color:#bbbbbb;letter-spacing:-0.141px;">Compare With...</span>
<span class="t" style="left:388.40px;top:616.10px;font-size:15px;color:#bbbbbb;letter-spacing:0.516px;">Ctrl+D</span>
<svg style="left:130px;top:618.1px;" width="15" height="14" viewBox="0 0 15 14"><rect x="0.3" y="4.4" width="7" height="9.6" fill="#7e7e7e"/><rect x="7.5" y="4.4" width="7" height="9.6" fill="#2f9ad9"/><g fill="#4aa8e0"><rect x="2.4" y="7.2" width="2.6" height="1.1"/><rect x="2.4" y="9.6" width="2.6" height="1.1"/></g><g fill="#e8e8e8"><rect x="9.6" y="7.2" width="2.6" height="1.1"/><rect x="9.6" y="9.6" width="2.6" height="1.1"/></g><path d="M3.4 4.6V3.4A2.6 2.4 0 0 1 6 1H9A2.6 2.4 0 0 1 11.6 3.4V4.6" fill="none" stroke="#b4b4b4" stroke-width="1.2"/><path d="M1.4 3.2L3.4 5.8L5.4 3.2zM9.6 3.2L11.6 5.8L13.6 3.2z" fill="#b4b4b4"/></svg>
<div style="left:126px;top:638px;width:319px;height:1px;background:#515151;"></div>
<div style="left:126px;top:641px;width:319px;height:23px;background:#4b6eaf;"></div>
<span class="t" style="left:149.70px;top:643.10px;font-size:15px;color:#bbbbbb;letter-spacing:0.230px;">Open Module Settings</span>
<span class="t" style="left:418.20px;top:643.10px;font-size:15px;color:#bbbbbb;letter-spacing:-1.500px;">F4</span>
<div style="left:126px;top:665px;width:319px;height:1px;background:#515151;"></div>
<span class="t" style="left:149.70px;top:670.10px;font-size:15px;color:#bbbbbb;letter-spacing:-0.474px;">Create Gist...</span>
<svg style="left:130px;top:672.0px;" width="15" height="15" viewBox="0 0 15 15"><circle cx="7.5" cy="7.5" r="6.8" fill="#1a1a1a" stroke="#c8c8c8" stroke-width="1.2"/><path d="M4 6.2C4 4.6 5.4 4.2 7.5 4.2S11 4.6 11 6.2C11 8.4 9.8 9 9 9.2V12H6V9.2C5.2 9 4 8.4 4 6.2z" fill="#e4e4e4"/><path d="M4.4 3.4L5.6 4.8M10.6 3.4L9.4 4.8" stroke="#e4e4e4" stroke-width="1.2"/><rect x="5.2" y="6" width="4.6" height="1.8" rx="0.9" fill="#1a1a1a"/></svg>
<div style="left:113px;top:638px;width:338px;height:36px;background:transparent;box-sizing:border-box;border:3px solid #f83a3a;"></div>
</div>
</body></html>
